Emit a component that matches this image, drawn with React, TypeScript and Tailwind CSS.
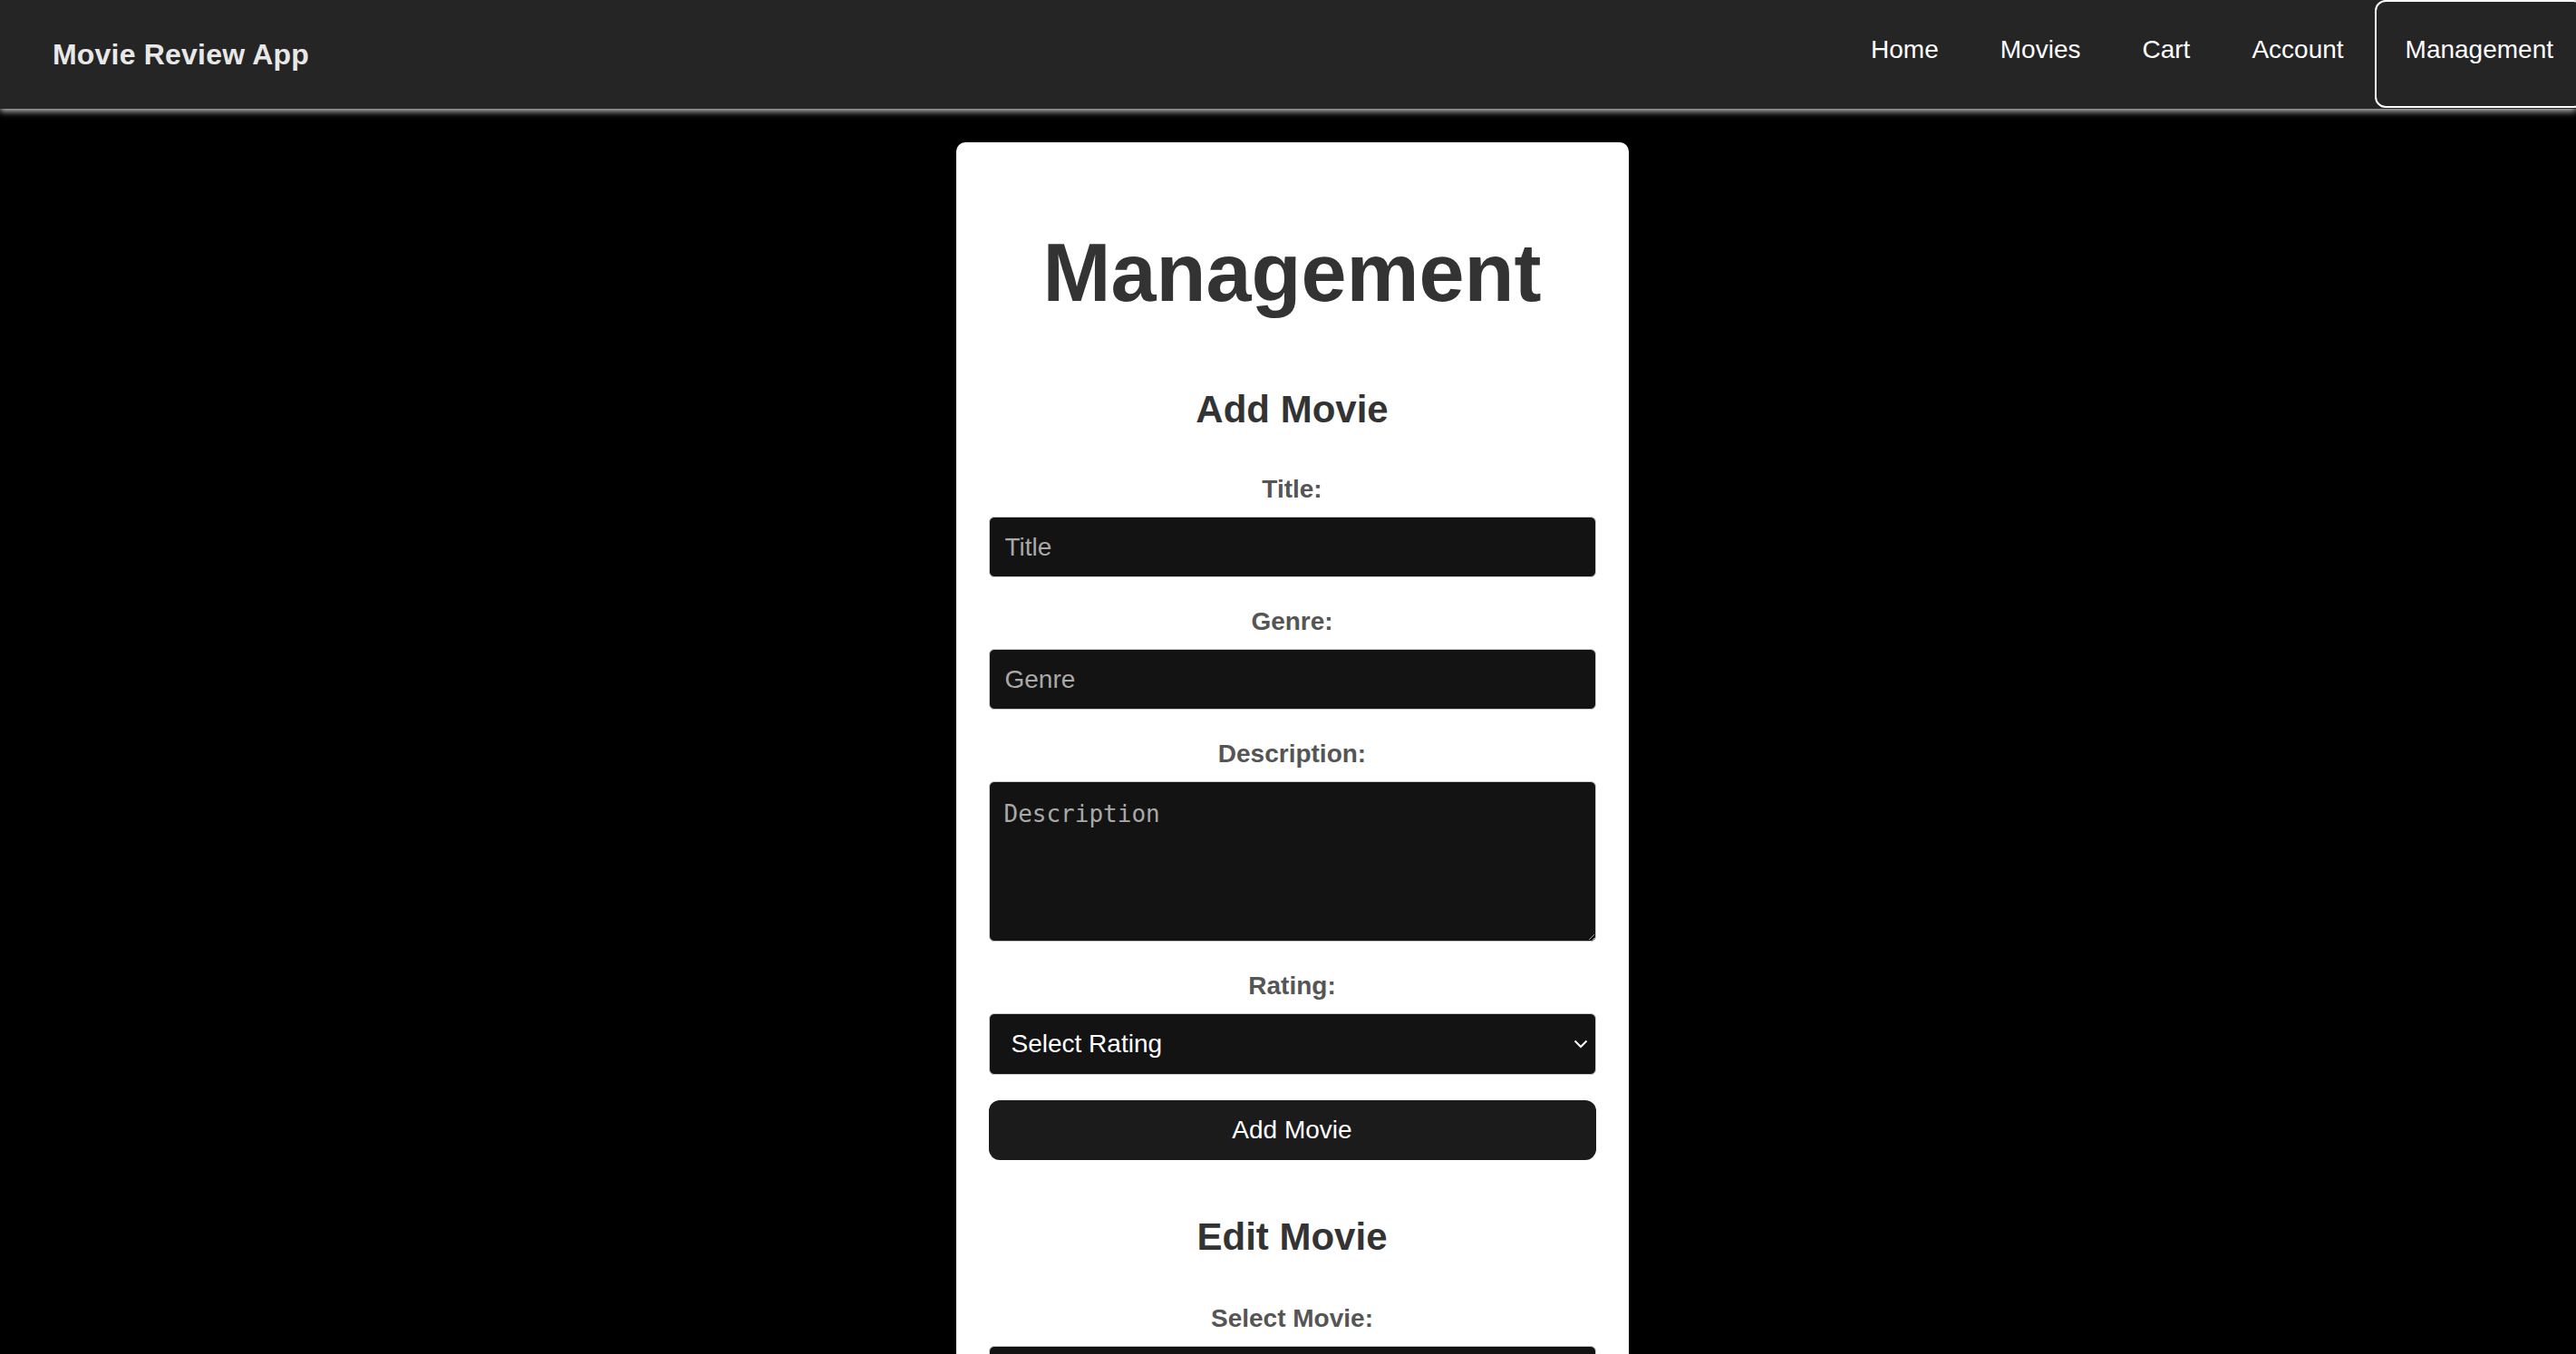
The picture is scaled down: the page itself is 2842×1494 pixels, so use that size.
import { useState } from 'react';

const links = ['Home', 'Movies', 'Cart', 'Account', 'Management'];

const Navbar = () => {
  const active = 'Management';
  return (
    <nav className="relative z-10 flex h-[120px] items-center justify-between bg-[#252525] pl-[58px] shadow-[0_3px_7px_rgba(255,255,255,0.75)]">
      <div className="text-[32px] font-bold tracking-[0.2px] text-[#e8e8e8]">Movie Review App</div>
      <ul className="mr-[-9px] flex h-full items-stretch">
        {links.map((link) => (
          <li key={link}>
            <a
              href="#"
              className={
                link === active
                  ? 'flex h-[119px] items-center rounded-[12px] border-2 border-white px-[32px] pb-[10px] text-[28px] text-white'
                  : 'flex h-[119px] items-center rounded-[12px] border-2 border-transparent px-[32px] pb-[10px] text-[28px] text-white'
              }
            >
              {link}
            </a>
          </li>
        ))}
      </ul>
    </nav>
  );
};

const Label = ({ children }: { children: React.ReactNode }) => (
  <label className="mb-[14px] block text-center text-[28px] font-bold leading-[32px] text-[#555]">{children}</label>
);

const Chevron = () => (
  <svg
    className="pointer-events-none absolute right-[9px] top-1/2 -translate-y-1/2"
    width="16"
    height="10"
    viewBox="0 0 16 10"
    fill="none"
  >
    <path d="M1.5 1.5 8 8l6.5-6.5" stroke="white" strokeWidth="2" />
  </svg>
);

export default function App() {
  const [title, setTitle] = useState('');
  const [genre, setGenre] = useState('');
  const [description, setDescription] = useState('');
  const [rating, setRating] = useState('');
  const [selected, setSelected] = useState('');

  const inputCls =
    'block h-[67px] w-full rounded-[6px] border border-[#ccc] bg-[#131313] px-[17px] text-[28px] text-white placeholder:text-[#a9a9a9] outline-none';

  return (
    <div className="min-h-screen overflow-hidden bg-black font-['Liberation_Sans',Arial,sans-serif]">
      <Navbar />
      <main className="flex justify-center pl-[9px] pt-[37px]">
        <div className="w-[742px] rounded-[10px] bg-white px-[36px] pt-[36px] pb-[40px]">
          <h1 className="mt-[57px] text-center text-[90px] font-bold leading-[103px] text-[#333]">Management</h1>

          <h2 className="mt-[75px] mb-[48px] text-center text-[42px] font-bold leading-[48px] text-[#333]">Add Movie</h2>
          <form onSubmit={(e) => e.preventDefault()}>
            <Label>Title:</Label>
            <input className={inputCls + ' mb-[33px]'} placeholder="Title" value={title} onChange={(e) => setTitle(e.target.value)} />

            <Label>Genre:</Label>
            <input className={inputCls + ' mb-[33px]'} placeholder="Genre" value={genre} onChange={(e) => setGenre(e.target.value)} />

            <Label>Description:</Label>
            <textarea
              className="mb-[33px] block h-[177px] w-full resize rounded-[6px] border border-[#ccc] bg-[#131313] px-[16px] pt-[16px] font-['DejaVu_Sans_Mono',monospace] text-[26px] text-white placeholder:text-[#a9a9a9] outline-none [color-scheme:dark]"
              placeholder="Description"
              value={description}
              onChange={(e) => setDescription(e.target.value)}
            />

            <Label>Rating:</Label>
            <div className="relative mb-[28px]">
              <select
                className="block h-[68px] w-full appearance-none rounded-[6px] border border-[#ccc] bg-[#131313] pl-[24px] text-[28px] text-white outline-none"
                value={rating}
                onChange={(e) => setRating(e.target.value)}
              >
                <option value="">Select Rating</option>
                {[1, 2, 3, 4, 5].map((n) => (
                  <option key={n} value={n}>
                    {n}
                  </option>
                ))}
              </select>
              <Chevron />
            </div>

            <button type="submit" className="block h-[66px] w-full rounded-[12px] bg-[#1b1b1b] text-[28px] text-white">
              Add Movie
            </button>
          </form>

          <h2 className="mt-[61px] mb-[50px] text-center text-[42px] font-bold leading-[48px] text-[#333]">Edit Movie</h2>
          <Label>Select Movie:</Label>
          <div className="relative">
            <select
              className="block h-[68px] w-full appearance-none rounded-[6px] border border-[#ccc] bg-[#131313] pl-[24px] text-[28px] text-white outline-none"
              value={selected}
              onChange={(e) => setSelected(e.target.value)}
            >
              <option value="">Select Movie</option>
            </select>
            <Chevron />
          </div>
        </div>
      </main>
    </div>
  );
}
